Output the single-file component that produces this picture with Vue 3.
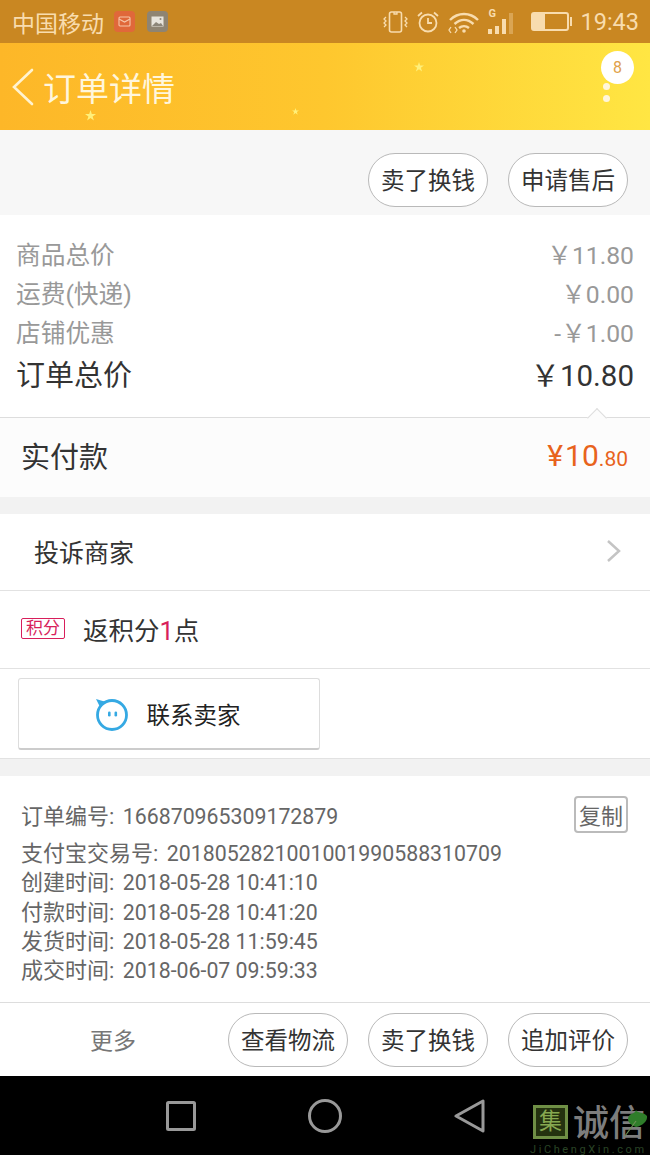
<script setup>
const priceRows = [
  { label: "商品总价", value: "￥11.80" },
  { label: "运费(快递)", value: "￥0.00" },
  { label: "店铺优惠", value: "-￥1.00" },
];
const infoRows = [
  { label: "支付宝交易号:", value: "2018052821001001990588310709" },
  { label: "创建时间:", value: "2018-05-28 10:41:10" },
  { label: "付款时间:", value: "2018-05-28 10:41:20" },
  { label: "发货时间:", value: "2018-05-28 11:59:45" },
  { label: "成交时间:", value: "2018-06-07 09:59:33" },
];
const stars = [
  { left: "85px", top: "67px", size: "11px" },
  { left: "292px", top: "65px", size: "7px" },
  { left: "414px", top: "19px", size: "10px" },
];
</script>

<template>
  <div class="page">
    <div class="status">
      <div class="status-left">
        <span class="carrier">中国移动</span>
        <span class="note note-red">
          <svg width="13" height="11" viewBox="0 0 13 11" fill="none" stroke="#f6c6a8" stroke-width="1.1"><rect x="1" y="1" width="11" height="9" rx="1"/><path d="M1 3l5.5 3L12 3"/></svg>
        </span>
        <span class="note note-grey">
          <svg width="13" height="11" viewBox="0 0 13 11"><rect x="0.5" y="0.5" width="12" height="10" fill="#e8e4dc"/><path d="M1 10l4-4 3 2 2-1 2 3z" fill="#8c8578"/><circle cx="9.5" cy="3" r="1" fill="#8c8578"/></svg>
        </span>
      </div>
      <div class="status-right">
        <svg width="25" height="24" viewBox="0 0 25 24" fill="none" stroke="#f8dcae" stroke-width="1.6">
          <rect x="6.5" y="2" width="12" height="20" rx="2"/>
          <path d="M11 2v2h3V2M3 7l-2 2 2 2-2 2 2 2 -2 2M22 7l2 2-2 2 2 2-2 2 2 2" stroke-width="1.3"/>
        </svg>
        <svg width="24" height="24" viewBox="0 0 24 24" fill="none" stroke="#f8dcae" stroke-width="1.8">
          <circle cx="12" cy="13" r="8.5"/>
          <path d="M12 8v5h4M2 6l4-3.500M22 6l-4-3.500"/>
        </svg>
        <svg width="32" height="24" viewBox="0 0 32 24" fill="none" stroke="#f8dcae" stroke-width="2.4">
          <path d="M2 10c8-8 20-8 28 0M6.500 14c6-5.500 13-5.500 19 0M11 18c3-2.500 7-2.500 10 0"/>
          <circle cx="16" cy="21" r="1.800" fill="#f8dcae" stroke="none"/>
          <path d="M3 17l-2 3 2 3M7 17l2 3-2 3" stroke-width="1.300"/>
        </svg>
        <span class="signal">
          <span class="signal-g">G</span>
          <i class="bar" style="height: 5px"></i>
          <i class="bar" style="height: 8px"></i>
          <i class="bar" style="height: 15px"></i>
          <i class="bar bar-off" style="height: 21px"></i>
        </span>
        <span class="battery"><i></i></span>
        <span class="clock">19:43</span>
      </div>
    </div>

    <div class="header">
      <svg class="back" width="24" height="38" viewBox="0 0 24 38" fill="none" stroke="#fff3d0" stroke-width="2.600" stroke-linecap="round"><path d="M21 2L3 19l18 17"/></svg>
      <h1>订单详情</h1>
      <i v-for="(s, i) in stars" :key="i" class="star" :style="{ left: s.left, top: s.top, width: s.size, height: s.size }"></i>
      <div class="menu">
        <i></i><i></i>
        <span class="badge">8</span>
      </div>
    </div>

    <div class="actions">
      <button class="pill">卖了换钱</button>
      <button class="pill">申请售后</button>
    </div>

    <div class="prices">
      <div v-for="row in priceRows" :key="row.label" class="price-row">
        <span>{{ row.label }}</span><span>{{ row.value }}</span>
      </div>
      <div class="price-row total">
        <span class="total-label">订单总价</span><span>￥10.80</span>
      </div>
    </div>

    <div class="paid">
      <i class="caret"></i>
      <span class="paid-label">实付款</span>
      <span class="paid-value">¥<b>10</b><small>.80</small></span>
    </div>

    <div class="row complain">
      <span>投诉商家</span>
      <svg width="16" height="24" viewBox="0 0 16 24" fill="none" stroke="#c4c4c4" stroke-width="2.500"><path d="M2 2l11 10L2 22"/></svg>
    </div>

    <div class="row points">
      <span class="tag">积分</span>
      <span>返积分<em>1</em>点</span>
    </div>

    <div class="contact">
      <button class="contact-btn">
        <svg width="36" height="36" viewBox="0 0 36 36" fill="none">
          <circle cx="18" cy="19" r="14.500" stroke="#35a9e3" stroke-width="2.800"/>
          <path d="M2 3l10 3-6 5z" fill="#35a9e3"/>
          <rect x="14" y="15.500" width="2.600" height="5" rx="1.300" fill="#35a9e3"/>
          <rect x="20.500" y="15.500" width="2.600" height="5" rx="1.300" fill="#35a9e3"/>
        </svg>
        <span>联系卖家</span>
      </button>
    </div>

    <div class="info">
      <div class="info-first">
        <span>订单编号: <span class="num">166870965309172879</span></span>
        <button class="copy">复制</button>
      </div>
      <div v-for="row in infoRows" :key="row.label" class="info-row">
        {{ row.label }} <span class="num">{{ row.value }}</span>
      </div>
    </div>

    <div class="bottom">
      <span class="more">更多</span>
      <button class="pill">查看物流</button>
      <button class="pill">卖了换钱</button>
      <button class="pill">追加评价</button>
    </div>

    <div class="nav">
      <svg width="32" height="32" viewBox="0 0 32 32" fill="none" stroke="#999" stroke-width="3"><rect x="2.500" y="2.500" width="27" height="27" rx="1"/></svg>
      <svg class="nav-home" width="36" height="36" viewBox="0 0 36 36" fill="none" stroke="#999" stroke-width="3"><circle cx="18" cy="18" r="15.500"/></svg>
      <svg class="nav-back" width="32" height="34" viewBox="0 0 32 34" fill="none" stroke="#999" stroke-width="3" stroke-linejoin="round"><path d="M29 2v30L2 17z"/></svg>
      <div class="mark">
        <span class="mark-box">集</span>
        <span class="mark-text">诚信</span>
        <svg class="leaf" width="26" height="30" viewBox="0 0 26 30"><path d="M13 3c1 3 8 2 11 6 1 5-5 10-11 11C7 18 3 13 6 9c2-3 6-2 7-6z" fill="#2f7d2a"/><path d="M13 14L2 29" stroke="#6d8f55" stroke-width="1.200"/></svg>
        <span class="mark-url">JiChengXin.com</span>
      </div>
    </div>
  </div>
</template>

<style>
html, body { margin: 0; background: #fff; }
</style>

<style scoped>
.page {
  width: 650px;
  height: 1155px;
  overflow: hidden;
  display: flex;
  flex-direction: column;
  font-family: Roboto, "Noto Sans CJK SC", sans-serif;
  background: #fff;
  color: #333;
}

button {
  font-family: inherit;
  background: #fff;
  padding: 0;
}

.status {
  height: 43px;
  flex: none;
  background: #c98722;
  display: flex;
  justify-content: space-between;
  align-items: center;
  padding: 0 11px 0 12px;
  color: #f8dcae;
  box-sizing: border-box;
}
.status-left, .status-right { display: flex; align-items: center; }
.carrier { font-size: 23px; margin-right: 10px; }
.note {
  width: 21px;
  height: 21px;
  border-radius: 4px;
  display: flex;
  align-items: center;
  justify-content: center;
  margin-right: 12px;
}
.note-red { background: #e0683a; }
.note-grey { background: #8f8472; }
.status-right { gap: 8px; }
.signal {
  position: relative;
  display: flex;
  align-items: flex-end;
  gap: 3px;
  height: 24px;
  width: 28px;
}
.signal-g {
  position: absolute;
  left: 0;
  top: -3px;
  font-size: 11px;
  font-weight: 700;
  line-height: 14px;
}
.bar { display: block; width: 4px; background: #f8dcae; }
.bar-off { opacity: 0.35; }
.battery {
  width: 38px;
  height: 19px;
  border: 2px solid #f8dcae;
  border-radius: 3px;
  margin-left: 7px;
  position: relative;
  box-sizing: border-box;
  margin-right: 3px;
}
.battery i {
  display: block;
  width: 12px;
  height: 15px;
  background: #f8dcae;
}
.battery::after {
  content: "";
  position: absolute;
  right: -5px;
  top: 3px;
  width: 2px;
  height: 9px;
  background: #f8dcae;
}
.clock { font-size: 23.500px; }

.header {
  height: 87px;
  flex: none;
  position: relative;
  display: flex;
  align-items: center;
  background: linear-gradient(90deg, #fdb728 0%, #fec72e 50%, #ffe643 100%);
}
.back { margin-left: 11px; }
h1 {
  margin: 0 0 0 8px;
  font-size: 33px;
  font-weight: 400;
  color: #fff6dc;
}
.star {
  position: absolute;
  background: #fff07a;
  clip-path: polygon(50% 0, 62% 36%, 100% 36%, 69% 58%, 81% 95%, 50% 72%, 19% 95%, 31% 58%, 0 36%, 38% 36%);
}
.menu i {
  position: absolute;
  left: 603px;
  width: 7px;
  height: 7px;
  border-radius: 50%;
  background: #fff6dc;
}
.menu i:nth-child(1) { top: 40px; }
.menu i:nth-child(2) { top: 52px; }
.badge {
  position: absolute;
  left: 601px;
  top: 8px;
  width: 33px;
  height: 33px;
  border-radius: 50%;
  background: #fff;
  color: #dfa24a;
  font-size: 16px;
  line-height: 33px;
  text-align: center;
}

.pill {
  width: 120px;
  height: 54px;
  border: 1px solid #b9b9b9;
  border-radius: 27px;
  font-size: 23.500px;
  color: #333;
  box-sizing: border-box;
  padding-bottom: 2px;
}

.actions {
  height: 85px;
  flex: none;
  box-sizing: border-box;
  background: #f7f7f7;
  display: flex;
  justify-content: flex-end;
  gap: 20px;
  padding: 23px 22px 0 0;
}

.prices {
  height: 203px;
  flex: none;
  box-sizing: border-box;
  padding: 21px 16px 0;
  border-bottom: 1px solid #ddd;
}
.price-row {
  display: flex;
  justify-content: space-between;
  height: 39px;
  line-height: 39px;
  font-size: 24.700px;
  color: #999;
}
.total {
  height: 46px;
  line-height: 47px;
  font-size: 29.500px;
  color: #333;
}
.total-label { font-size: 29px; }

.paid {
  flex: none;
  box-sizing: border-box;
  position: relative;
  background: #fcfcfc;
  display: flex;
  justify-content: space-between;
  align-items: center;
  padding: 0 22px 5px 21px;
  border-bottom: 17px solid #f2f2f2;
  height: 96px;
}
.caret {
  position: absolute;
  left: 590px;
  top: -7px;
  width: 14px;
  height: 14px;
  background: #fcfcfc;
  border-top: 1px solid #ddd;
  border-left: 1px solid #ddd;
  transform: rotate(45deg);
  box-sizing: border-box;
}
.paid-label { font-size: 29px; color: #333; }
.paid-value { font-size: 30px; color: #e8631c; }
.paid-value b { font-size: 30px; font-weight: 400; margin-left: 2px; }
.paid-value small { font-size: 21px; }

.row {
  flex: none;
  box-sizing: border-box;
  display: flex;
  align-items: center;
  border-bottom: 1px solid #e2e2e2;
  font-size: 25px;
  color: #333;
}
.complain {
  height: 77px;
  justify-content: space-between;
  padding: 0 28px 2px 34px;
}
.points {
  height: 78px;
  padding: 0 0 2px 21px;
  gap: 18px;
  font-size: 25.500px;
}
.tag {
  width: 44px;
  height: 21px;
  box-sizing: border-box;
  border: 1px solid #d81e5b;
  border-radius: 2px;
  color: #d81e5b;
  font-size: 17px;
  line-height: 18px;
  text-align: center;
}
em { font-style: normal; color: #d81e5b; }

.contact {
  height: 90px;
  flex: none;
  box-sizing: border-box;
  padding: 9px 0 0 18px;
  border-bottom: 1px solid #e2e2e2;
}
.contact-btn {
  width: 302px;
  height: 72px;
  box-sizing: border-box;
  border: 1px solid #ddd;
  border-bottom: 2px solid #ccc;
  border-radius: 3px;
  display: flex;
  align-items: center;
  justify-content: center;
  gap: 17px;
  font-size: 23.500px;
  color: #222;
  padding-right: 4px;
}

.info {
  flex: none;
  height: 244px;
  box-sizing: border-box;
  border-top: 17px solid #f2f2f2;
  border-bottom: 1px solid #ddd;
  padding: 19px 22px 0 21px;
  font-size: 22px;
  color: #666;
}
.info-first {
  display: flex;
  justify-content: space-between;
  align-items: center;
  height: 38px;
  margin-bottom: 6px;
}
.info-row {
  height: 29.250px;
  line-height: 29.250px;
}
.num { font-size: 21.300px; margin-left: 3px; }
.copy {
  width: 54px;
  height: 37px;
  box-sizing: border-box;
  border: 2px solid #bbb;
  border-radius: 4px;
  font-size: 22px;
  color: #666;
}

.bottom {
  height: 73px;
  flex: none;
  box-sizing: border-box;
  display: flex;
  align-items: center;
  justify-content: flex-end;
  gap: 20px;
  padding-right: 22px;
  position: relative;
}
.more {
  position: absolute;
  left: 90px;
  top: 19px;
  font-size: 23px;
  color: #777;
}

.nav {
  flex: 1;
  background: #000;
  position: relative;
  display: flex;
  align-items: center;
  padding: 0 0 0 165px;
}
.nav-home { margin-left: 110px; }
.nav-back { margin-left: 111px; }
.mark {
  position: absolute;
  left: 533px;
  top: 29px;
  width: 117px;
  height: 50px;
}
.mark-box {
  position: absolute;
  left: 0;
  top: 0;
  width: 35px;
  height: 34px;
  box-sizing: border-box;
  border: 3px solid #6f8f45;
  background: #24320f;
  color: #86a850;
  font-size: 23px;
  line-height: 27px;
  text-align: center;
}
.mark-text {
  position: absolute;
  left: 40px;
  top: -6px;
  font-size: 36px;
  line-height: 50px;
  font-weight: 500;
  color: #7d7d7d;
  white-space: nowrap;
}
.leaf { position: absolute; left: 90px; top: 2px; }
.mark-url {
  position: absolute;
  left: -3px;
  top: 38px;
  font-size: 11px;
  letter-spacing: 2.600px;
  color: #2a4426;
  white-space: nowrap;
}
</style>
